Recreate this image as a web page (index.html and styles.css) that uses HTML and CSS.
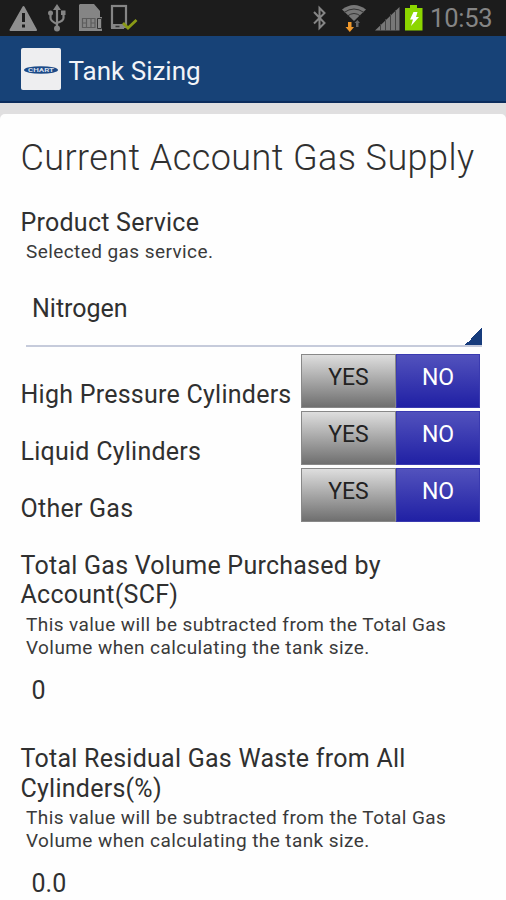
FILE: index.html
```
<!DOCTYPE html>
<html lang="en">

<head>
    <meta charset="utf-8">
    <title>Tank Sizing</title>
    <link rel="stylesheet" href="styles.css">
</head>

<body>
    <div class="statusbar">
        <svg class="status-icons" width="140" height="35" viewBox="0 0 140 35">
            <!-- warning -->
            <path d="M23.500 7 36 30H10.500z" fill="#8f8f8f" stroke="#8f8f8f" stroke-width="2" stroke-linejoin="round" />
            <path d="M23.500 13v9M23.500 24.500v3" stroke="#1c1c1c" stroke-width="3" />
            <!-- usb -->
            <path d="M57 8v20M50.500 14v4q0 3 6.500 6M63.500 14v4q0 3-6.500 5" fill="none" stroke="#858585" stroke-width="2.200" />
            <g fill="#858585">
                <path d="M57 4l4 6h-8zM61 10.500h4.500v4.500h-4.500z" />
                <circle cx="50.500" cy="13" r="2.500" />
                <circle cx="57" cy="28.500" r="3" />
            </g>
            <!-- sim card -->
            <path d="M80 4h14l6 7v6h2v14H79V5z" fill="#858585" />
            <path d="M82.500 18.500h12.500v9H82.500zM86.500 18.500v9M91 18.500v9M82.500 23h4M91 23h4" fill="none" stroke="#5c5c5c" stroke-width="1.200" />
            <path d="M97.500 18.500h4v10h-4z" fill="#8d8d8d" stroke="#333" />
            <!-- phone with check -->
            <rect x="112" y="6" width="14" height="21" fill="none" stroke="#858585" stroke-width="2.200" />
            <path d="M111 24h13v5h-13z" fill="#858585" />
            <path d="M115.500 26.500h4" stroke="#333" stroke-width="1.500" />
            <path d="M123 23l5 5 8.500-8" fill="none" stroke="#8a9a16" stroke-width="2.800" />
        </svg>
        <div class="status-right">
            <svg width="118" height="35" viewBox="308 0 118 35">
                <!-- bluetooth -->
                <path d="M314 12l10.500 11-5 5V8l5 5-10.500 10.500" fill="none" stroke="#858585" stroke-width="2" />
                <!-- wifi -->
                <path d="M342 9.500q12-9 24 0L354 21z" fill="#777" />
                <path d="M344 12.500q10-7 20 0M347.500 16q6.500-5 13 0" fill="none" stroke="#333" stroke-width="1" />
                <path d="M348 22h3.500v5h2.500l-4.200 5-4.300-5h2.500z" fill="#f0982a" />
                <path d="M356 27v-4h-1.500l3-3 2.500 3h-1.500v4z" fill="#666" />
                <!-- signal -->
                <path d="M375 30.500L399.500 7v23.500z" fill="#777" />
                <path d="M380.500 24v7M385.500 19v12M390.500 14v17M395.500 10v21" stroke="#444" stroke-width="1" />
                <!-- battery -->
                <path d="M405 8h5V5h7v3h5.500v22.500H405z" fill="#8cd600" />
                <path d="M413.500 12h4l-1.500 5h3l-8 9 2-6.500h-3z" fill="#fff" />
            </svg>
            <span class="clock">10:53</span>
        </div>
    </div>

    <div class="header">
        <svg class="logo" width="40" height="42" viewBox="0 0 40 42">
            <rect width="40" height="42" rx="2" fill="#eeeef0" />
            <ellipse cx="20" cy="22" rx="17" ry="3.800" fill="#1c4a88" />
            <text x="20" y="23.800" text-anchor="middle" textLength="26" lengthAdjust="spacingAndGlyphs">CHART</text>
        </svg>
        <h1 class="title">Tank Sizing</h1>
    </div>

    <div class="card">
        <h2 class="heading">Current Account Gas Supply</h2>

        <div class="label">Product Service</div>
        <div class="hint">Selected gas service.</div>
        <div class="spinner">Nitrogen</div>

        <div class="toggles">
            <div class="row">
                <div class="label">High Pressure Cylinders</div>
                <div class="toggle">
                    <button class="yes">YES</button>
                    <button class="no">NO</button>
                </div>
            </div>
            <div class="row">
                <div class="label">Liquid Cylinders</div>
                <div class="toggle">
                    <button class="yes">YES</button>
                    <button class="no">NO</button>
                </div>
            </div>
            <div class="row">
                <div class="label">Other Gas</div>
                <div class="toggle">
                    <button class="yes">YES</button>
                    <button class="no">NO</button>
                </div>
            </div>
        </div>

        <div class="field">
            <div class="label">Total Gas Volume Purchased by<br>Account(SCF)</div>
            <div class="hint">This value will be subtracted from the Total Gas<br>Volume when calculating the tank size.</div>
            <div class="value">0</div>
        </div>
        <div class="field">
            <div class="label">Total Residual Gas Waste from All<br>Cylinders(%)</div>
            <div class="hint">This value will be subtracted from the Total Gas<br>Volume when calculating the tank size.</div>
            <div class="value">0.0</div>
        </div>
    </div>
</body>

</html>
```

FILE: styles.css
```
* {
    box-sizing: border-box;
}

body {
    margin: 0;
    height: 900px;
    overflow: hidden;
    background: #e0dfe0;
    font-family: Roboto, sans-serif;
    color: #303030;
}

.statusbar {
    height: 36px;
    background: #1c1c1c;
    display: flex;
    justify-content: space-between;
}

.status-right {
    display: flex;
    padding-right: 14px;
}

.clock {
    width: 66px;
    padding-left: 4px;
    font-size: 25.5px;
    line-height: 36px;
    letter-spacing: -0.2px;
    color: #858585;
    white-space: nowrap;
}

.header {
    height: 67px;
    padding: 1px 0 0 20.5px;
    display: flex;
    align-items: center;
    background: #174277;
    border-bottom: 2px solid #0c2c5c;
}

.logo text {
    font-size: 4.5px;
    font-weight: bold;
    fill: #d5deea;
}

.title {
    margin: 3px 0 0 8px;
    font-size: 26px;
    font-weight: 400;
    color: #f2f4f8;
}

.card {
    height: 800px;
    margin-top: 11px;
    padding: 19px 25px 0 20.5px;
    background: #fefefe;
    border-radius: 5px 5px 0 0;
}

.heading {
    margin: 0;
    height: 74.5px;
    font-size: 36px;
    line-height: 50px;
    font-weight: 300;
    letter-spacing: 0.43px;
    white-space: nowrap;
}

.label {
    font-size: 25px;
    line-height: 29.5px;
    letter-spacing: 0.25px;
    white-space: nowrap;
}

.hint {
    padding: 3px 0 0 5.5px;
    font-size: 19px;
    line-height: 23px;
    letter-spacing: 0.42px;
    color: #3a3a3a;
    white-space: nowrap;
}

.spinner {
    height: 83.5px;
    margin-left: 5.5px;
    margin-right: -1px;
    padding: 31px 0 0 6px;
    font-size: 25px;
    line-height: 30px;
    background: linear-gradient(135deg, transparent 50%, #173c7c 50%) right bottom / 17px 17px no-repeat;
    border-bottom: 2px solid #c6cbdb;
}

.toggles {
    margin-top: 5px;
}

.row {
    height: 57px;
    display: flex;
    justify-content: space-between;
    align-items: flex-start;
    padding: 2px 1px 0 0;
}

.row .label {
    padding-top: 26px;
}

.toggle {
    display: flex;
    height: 54px;
    width: 179px;
}

.toggle button {
    padding: 0 0 6px;
    border: 1px solid #888;
    font-family: inherit;
    font-size: 23px;
}

.toggle .yes {
    width: 95px;
    background: linear-gradient(#dedede, #6f6f6f);
    color: #222;
}

.toggle .no {
    width: 84px;
    background: linear-gradient(#5252bd, #2020a4);
    border-color: #3a3ab0;
    color: #fff;
}

.field {
    height: 193.5px;
    padding-top: 28px;
}

.value {
    padding: 17px 0 0 11px;
    font-size: 25px;
    line-height: 30px;
}
```
